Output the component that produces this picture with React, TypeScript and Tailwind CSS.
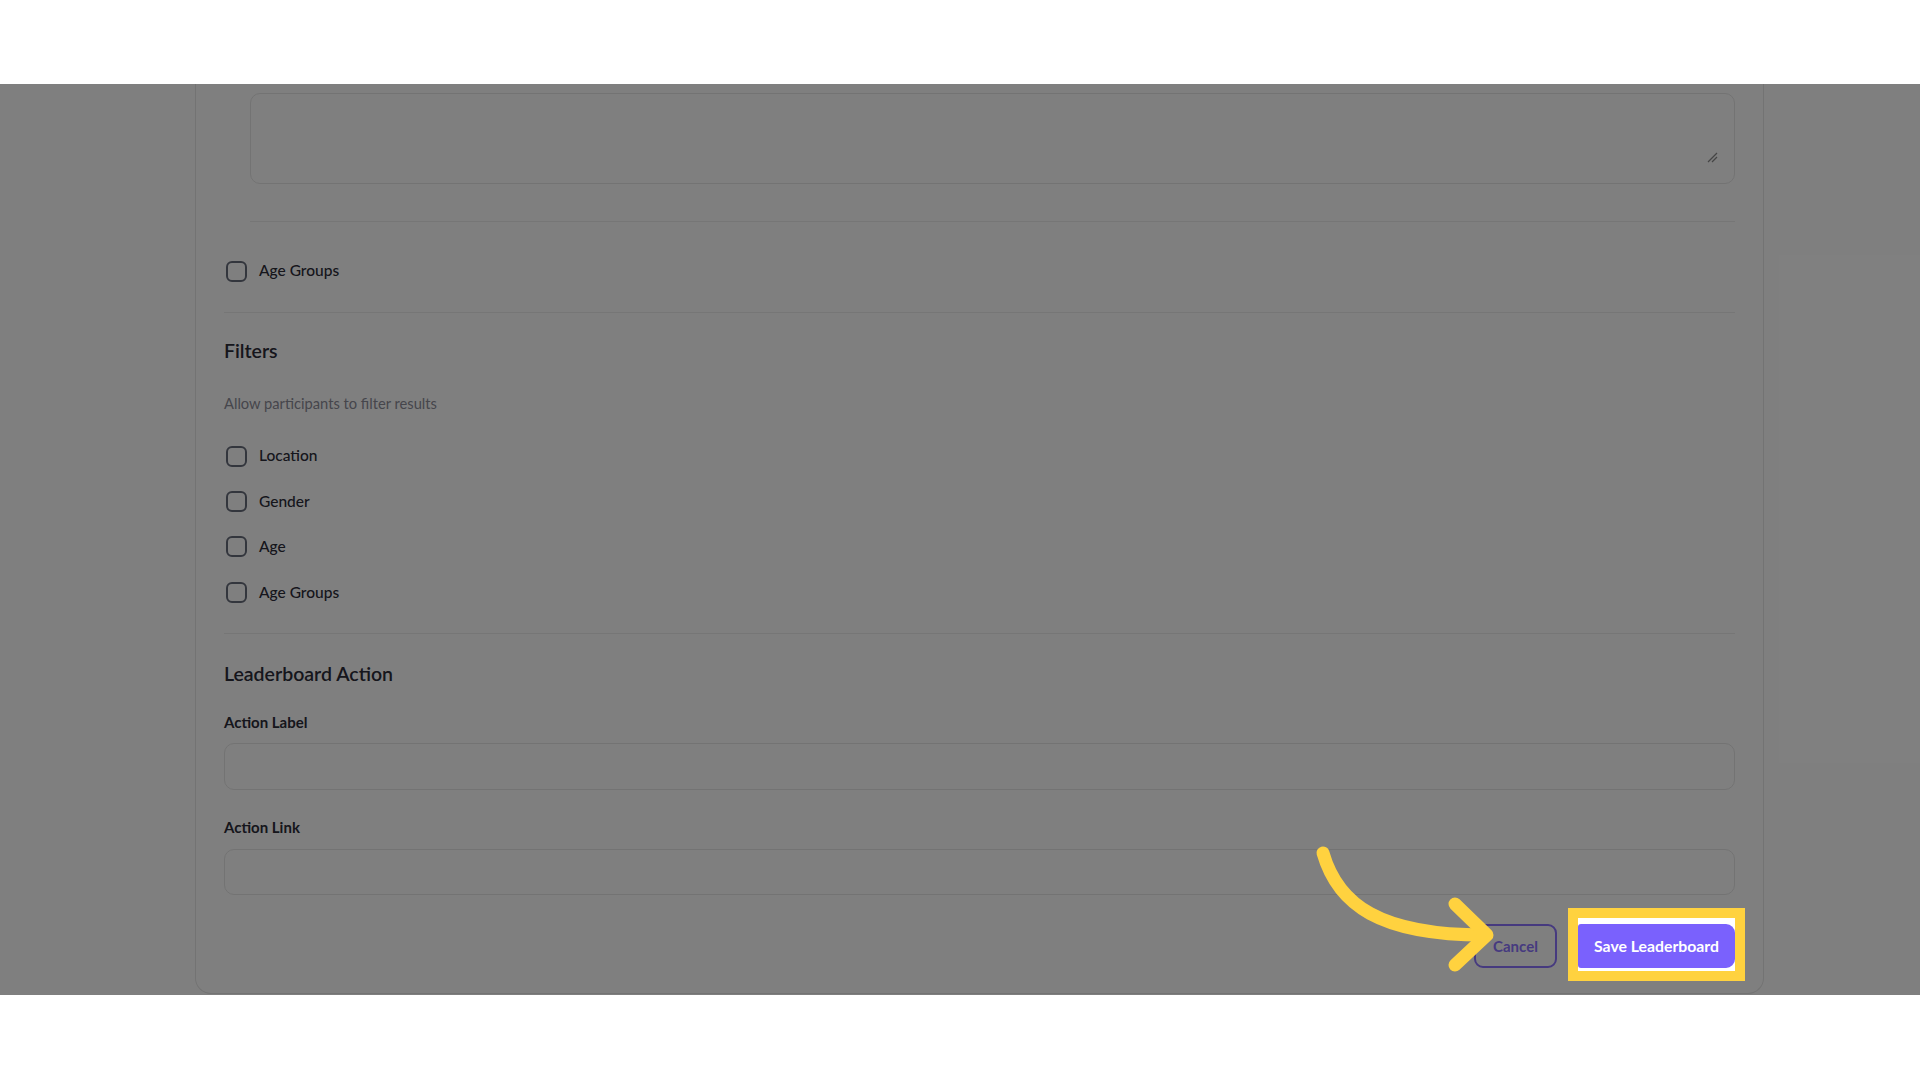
import React from "react";

const font = { fontFamily: "Lato, 'Open Sans', Arial, sans-serif" };

function Check({ label }: { label: string }) {
  return (
    <div className="flex h-[22px] items-center gap-[12px]">
      <div className="ml-[2px] h-[21px] w-[21px] rounded-[6px] border-2 border-[#676c7b] bg-white" />
      <span className="text-[15.5px] font-medium text-[#2c2c38]">{label}</span>
    </div>
  );
}

export default function App() {
  return (
    <div className="flex h-[1080px] w-[1920px] flex-col bg-white" style={font}>
      <div className="h-[84px] bg-white" />
      <div className="relative h-[911px] overflow-hidden bg-white">
        <div className="ml-[195px] w-[1569px] rounded-b-2xl border border-t-0 border-[#e6e6e6] bg-white px-[28px] pb-[25px] pt-[9px]">
          {/* previous option textarea */}
          <div className="ml-[26px]">
            <div className="relative h-[91px] rounded-[10px] border border-[#e6e6e6]">
              <svg
                className="absolute bottom-[20px] right-[16px]"
                width="12"
                height="12"
                viewBox="0 0 12 12"
              >
                <path d="M2 11 L11 2" stroke="#8a8a8a" strokeWidth="1.3" />
                <path d="M6 11 L11 6" stroke="#8a8a8a" strokeWidth="1.3" />
              </svg>
            </div>
            <div className="mt-[37px] h-px bg-[#ececec]" />
          </div>
          <div className="mt-[38px]">
            <Check label="Age Groups" />
          </div>
          <div className="mt-[30px] h-px bg-[#ececec]" />

          {/* Filters */}
          <div className="mt-[26px] flex h-[24px] items-center text-[19.5px] font-semibold text-[#2c2c38]">
            Filters
          </div>
          <div className="mt-[30px] flex h-[20px] items-center text-[14.7px] text-[#8c8c98]">
            Allow participants to filter results
          </div>
          <div className="mt-[32px] flex flex-col gap-[23.4px]">
            <Check label="Location" />
            <Check label="Gender" />
            <Check label="Age" />
            <Check label="Age Groups" />
          </div>
          <div className="mt-[30px] h-px bg-[#ececec]" />

          {/* Leaderboard Action */}
          <div className="mt-[27px] flex h-[24px] items-center text-[19.5px] font-semibold text-[#2c2c38]">
            Leaderboard Action
          </div>
          <div className="mt-[27px] flex h-[20px] items-center text-[15px] font-bold text-[#2c2c38]">
            Action Label
          </div>
          <div className="mt-[11px] h-[47px] rounded-[10px] border border-[#e6e6e6]" />
          <div className="mt-[27px] flex h-[20px] items-center text-[15px] font-bold text-[#2c2c38]">
            Action Link
          </div>
          <div className="mt-[12px] h-[46px] rounded-[10px] border border-[#e6e6e6]" />

          {/* Buttons */}
          <div className="mt-[29px] flex h-[44px] items-start justify-end gap-[21px]">
            <button className="h-[44px] w-[83px] rounded-[9px] border-2 border-[#8c74ff] text-[15px] font-bold text-[#8c74ff]">
              Cancel
            </button>
            <div className="relative z-20 -mt-[6px] bg-white pb-[3px] pt-[6px] outline outline-[10px] outline-[#ffd23f]">
              <button className="h-[44px] w-[157px] rounded-r-[9px] rounded-l-[3px] bg-[#7a61fd] text-[15.8px] font-bold text-white">
                Save Leaderboard
              </button>
            </div>
          </div>
        </div>

        {/* dim overlay */}
        <div className="absolute inset-0 z-10 bg-black/50" />

        {/* annotation arrow */}
        <svg
          className="pointer-events-none absolute left-0 top-0 z-30"
          width="1920"
          height="911"
          viewBox="0 84 1920 911"
        >
          <path
            d="M1323 853 C1338 905 1380 935 1484 935"
            fill="none"
            stroke="#ffd23f"
            strokeWidth="13"
            strokeLinecap="round"
          />
          <path
            d="M1455 904 L1487 935 L1455 965"
            fill="none"
            stroke="#ffd23f"
            strokeWidth="13"
            strokeLinecap="round"
            strokeLinejoin="round"
          />
        </svg>
      </div>
      <div className="h-[85px] bg-white" />
    </div>
  );
}
